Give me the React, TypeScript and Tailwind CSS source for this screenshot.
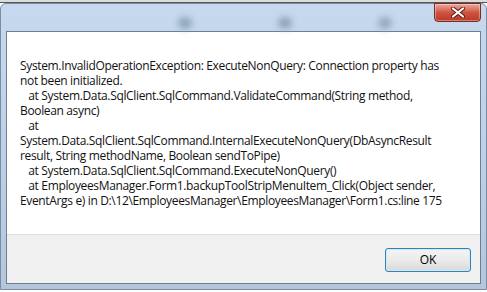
import React from "react";

const lines = [
  "System.InvalidOperationException: ExecuteNonQuery: Connection property has",
  "not been initialized.",
  "   at System.Data.SqlClient.SqlCommand.ValidateCommand(String method,",
  "Boolean async)",
  "   at",
  "System.Data.SqlClient.SqlCommand.InternalExecuteNonQuery(DbAsyncResult",
  "result, String methodName, Boolean sendToPipe)",
  "   at System.Data.SqlClient.SqlCommand.ExecuteNonQuery()",
  "   at EmployeesManager.Form1.backupToolStripMenuItem_Click(Object sender,",
  "EventArgs e) in D:\\12\\EmployeesManager\\EmployeesManager\\Form1.cs:line 175",
];

const CloseX = () => (
  <svg width="14" height="11" viewBox="0 0 14 11">
    <path d="M2 1.5 L12 9.5 M12 1.5 L2 9.5" stroke="#5a1a12" strokeWidth="4" strokeLinecap="round" />
    <path d="M2 1.5 L12 9.5 M12 1.5 L2 9.5" stroke="#ffffff" strokeWidth="2.2" strokeLinecap="round" />
  </svg>
);

export default function App() {
  return (
    <div className="w-[487px] h-[292px] bg-white overflow-hidden flex flex-col font-['Segoe_UI','Open_Sans',sans-serif]">
      {/* background app peeking above the dialog */}
      <div className="h-[3px] bg-[#dcdcdc] border-b border-[#555]" />

      <div className="relative flex-1 flex flex-col rounded-t-[6px] border border-[#7b8da3] bg-gradient-to-b from-[#c6d9ee] via-[#bcd2ea] to-[#b3c6dc] px-[5px] pb-[5px] mb-[2px]">
        {/* blurred shapes behind the glass title bar */}
        <div className="absolute left-[177px] top-[13px] w-[14px] h-[12px] rounded-full bg-[#8fa5bb] blur-[3px]" />
        <div className="absolute left-[277px] top-[13px] w-[14px] h-[12px] rounded-full bg-[#8fa5bb] blur-[3px]" />
        <div className="absolute left-[377px] top-[13px] w-[14px] h-[12px] rounded-full bg-[#95aabf] blur-[3px]" />

        <div className="h-[27px] flex justify-end items-start">
          <div className="relative -mt-px w-[47px] h-[19px] rounded-b-[4px] border border-[#7a2b22] bg-gradient-to-b from-[#e9a99c] via-[#cf5340] to-[#b83a26] flex items-center justify-center shadow-[inset_0_0_0_1px_rgba(255,255,255,0.35)]">
            <CloseX />
          </div>
        </div>

        <div className="flex-1 flex flex-col border border-[#6f7f90] bg-white">
          <div className="h-[202px] pl-[13px] pt-[26px] text-[12px] leading-[15px] text-[#111] tracking-[-0.35px]">
            {lines.map((l, i) => (
              <div key={i} className="whitespace-pre">
                {l}
              </div>
            ))}
          </div>
          <div className="flex-1 bg-[#f0f0f0] border-t border-[#dfdfdf] flex justify-end items-start pt-[13px] pr-[9px]">
            <button className="w-[86px] h-[24px] rounded-[3px] border border-[#3c7fb1] bg-gradient-to-b from-[#f4f4f4] via-[#ebebeb] to-[#d9d9d9] shadow-[inset_0_0_0_1px_#c9ecfb] text-[12px] text-black">
              OK
            </button>
          </div>
        </div>
      </div>
    </div>
  );
}
